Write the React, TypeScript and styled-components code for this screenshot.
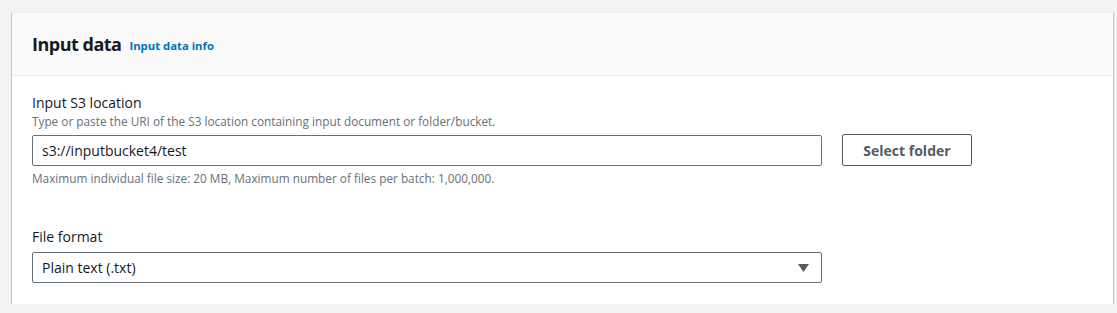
import * as React from "react";
import styled, { createGlobalStyle } from "styled-components";

const GlobalStyle = createGlobalStyle`
  html, body {
    margin: 0;
    padding: 0;
    background: #f2f3f3;
  }
  body {
    font-family: "Open Sans", "Noto Sans", sans-serif;
    color: #16191f;
  }
`;

const Page = styled.div`
  padding: 12px 4px 0 12px;
`;

const Card = styled.section`
  background: #fff;
  border-top: 1px solid #eaeded;
  box-shadow: 0 1px 1px 0 rgba(0, 28, 36, 0.3), 1px 1px 1px 0 rgba(0, 28, 36, 0.15),
    -1px 1px 1px 0 rgba(0, 28, 36, 0.15);
`;

const Header = styled.header`
  height: 63px;
  box-sizing: border-box;
  padding: 0 20px;
  display: flex;
  align-items: center;
  gap: 8px;
  background: #fafafa;
  border-bottom: 1px solid #eaeded;
`;

const Title = styled.h2`
  margin: 0;
  font-size: 18px;
  font-weight: 700;
  letter-spacing: -0.5px;
  line-height: 24px;
`;

const InfoLink = styled.a`
  font-size: 11.3px;
  font-weight: 700;
  color: #0073bb;
  text-decoration: none;
  line-height: 24px;
  padding-top: 3px;
`;

const Body = styled.div`
  padding: 17px 20px 21px;
`;

const Field = styled.div<{ $gap?: number }>`
  margin-top: ${(p) => p.$gap ?? 0}px;
`;

const Label = styled.div`
  font-size: 14px;
  line-height: 20px;
`;

const Description = styled.div`
  font-size: 11.8px;
  line-height: 16px;
  color: #687078;
`;

const Hint = styled(Description)`
  margin-top: 4px;
`;

const Row = styled.div`
  display: flex;
  align-items: center;
  gap: 20px;
  margin-top: 6px;
`;

const Input = styled.div`
  width: 790px;
  height: 31px;
  box-sizing: border-box;
  border: 1px solid #687078;
  border-radius: 2px;
  padding: 0 9px;
  display: flex;
  align-items: center;
  font-size: 14px;
`;

const Button = styled.button`
  width: 130px;
  height: 32px;
  margin-top: -1px;
  border: 1px solid #545b64;
  border-radius: 2px;
  background: #fff;
  color: #545b64;
  font-family: inherit;
  font-size: 14px;
  font-weight: 700;
`;

const Select = styled(Input)`
  margin-top: 5px;
  justify-content: space-between;
  padding-right: 12px;
`;

const Caret = styled.svg`
  width: 11px;
  height: 8px;
  fill: #545b64;
`;

export default function App() {
  return (
    <>
      <GlobalStyle />
      <Page>
        <Card>
          <Header>
            <Title>Input data</Title>
            <InfoLink href="#">Input data info</InfoLink>
          </Header>
          <Body>
            <Field>
              <Label>Input S3 location</Label>
              <Description>
                Type or paste the URI of the S3 location containing input document or folder/bucket.
              </Description>
              <Row>
                <Input>s3://inputbucket4/test</Input>
                <Button>Select folder</Button>
              </Row>
              <Hint>
                Maximum individual file size: 20 MB, Maximum number of files per batch: 1,000,000.
              </Hint>
            </Field>
            <Field $gap={41}>
              <Label>File format</Label>
              <Select>
                <span>Plain text (.txt)</span>
                <Caret viewBox="0 0 11 8">
                  <path d="M0 0h11L5.5 8z" />
                </Caret>
              </Select>
            </Field>
          </Body>
        </Card>
      </Page>
    </>
  );
}
